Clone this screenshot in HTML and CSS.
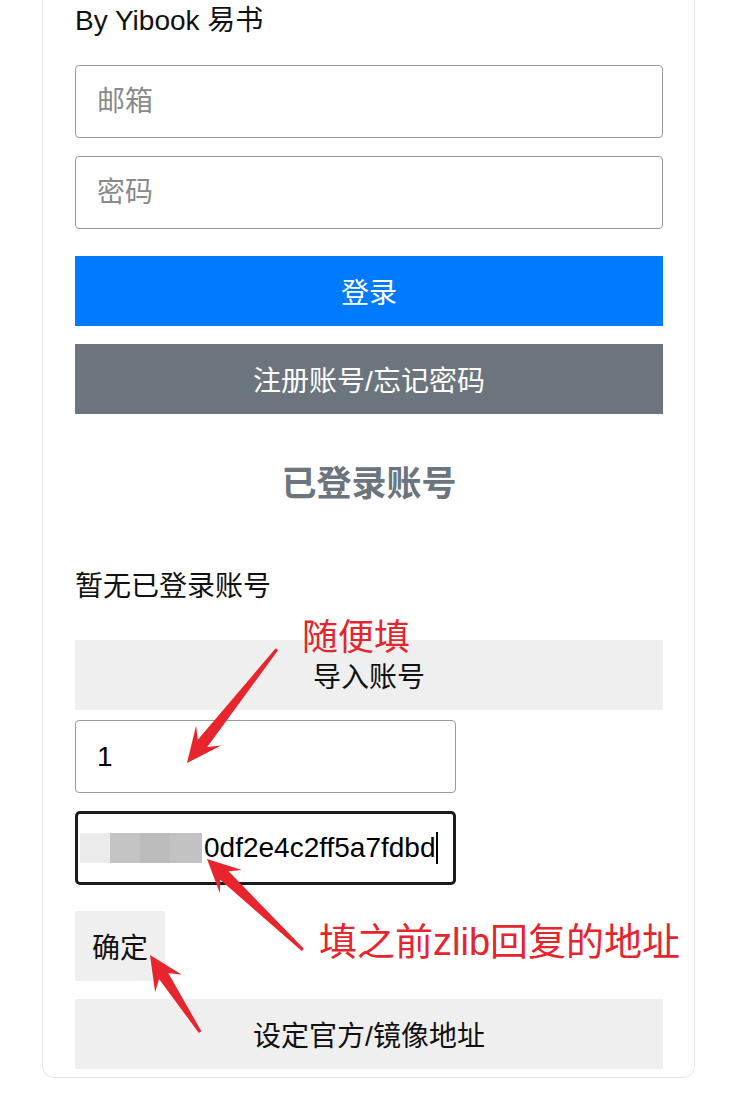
FILE: index.html
```html
<!DOCTYPE html>
<html lang="zh-CN">
<head>
<meta charset="utf-8">
<title>Yibook 易书</title>
<link rel="stylesheet" href="styles.css">
</head>
<body>
<div class="page">
  <div class="card">
    <div class="brand">By Yibook 易书</div>
    <input class="field field-first" type="text" placeholder="邮箱">
    <input class="field" type="password" placeholder="密码">
    <button class="btn btn-primary">登录</button>
    <button class="btn btn-secondary">注册账号/忘记密码</button>
    <h2 class="heading">已登录账号</h2>
    <p class="empty">暂无已登录账号</p>
    <button class="btn btn-light btn-import">导入账号</button>
    <input class="field narrow field-id" type="text" value="1">
    <div class="field narrow focused">
      <span class="blur blur-1"></span><span class="blur blur-2"></span><span class="blur blur-3"></span><span class="blur blur-4"></span><span class="value">0df2e4c2ff5a7fdbd</span><span class="caret"></span>
    </div>
    <button class="btn btn-light btn-confirm">确定</button>
    <button class="btn btn-light">设定官方/镜像地址</button>
  </div>

  <svg class="overlay" width="735" height="1102" viewBox="0 0 735 1102">
    <g class="arrow" transform="translate(187 763) rotate(128.3)">
      <polygon points="-145,-1.5 -25,-6 -35,-16 0,0 -35,16 -25,6 -145,1.5"/>
    </g>
    <g class="arrow" transform="translate(207 859) rotate(-136.5)">
      <polygon points="-132,-1.5 -24,-6 -33,-16 0,0 -33,16 -24,6 -132,1.5"/>
    </g>
    <g class="arrow" transform="translate(150 955) rotate(-123)">
      <polygon points="-92,-1.5 -25,-5.5 -34,-16 0,0 -34,16 -25,5.5 -92,1.5"/>
    </g>
  </svg>
  <div class="note note-1">随便填</div>
  <div class="note note-2">填之前zlib回复的地址</div>
</div>
</body>
</html>
```

FILE: styles.css
```css
html, body {
  margin: 0;
  padding: 0;
  background: #ffffff;
}

body {
  font-family: "Liberation Sans", "Noto Sans CJK SC", sans-serif;
  color: #212529;
}

.page {
  position: relative;
  width: 735px;
  height: 1102px;
  overflow: hidden;
}

.card {
  margin: -20px 0 0 42px;
  width: 653px;
  box-sizing: border-box;
  border: 1px solid #e6e6e6;
  border-radius: 12px;
  padding: 22px 31px 8px 32px;
  display: flex;
  flex-direction: column;
}

.brand {
  font-size: 28px;
  line-height: 36px;
  color: #111111;
}

.field {
  height: 73px;
  box-sizing: border-box;
  margin: 18px 0 0;
  border: 1px solid #9a9a9a;
  border-radius: 4px;
  padding: 0 21px;
  font-family: "Liberation Sans", "Noto Sans CJK SC", sans-serif;
  font-size: 28px;
  color: #000000;
  background: #ffffff;
  outline: none;
}

.field::placeholder {
  color: #8a8a8a;
}

.field-first {
  margin-top: 26px;
}

.btn {
  height: 70px;
  margin: 18px 0 0;
  border: 0;
  border-radius: 0;
  padding: 0;
  font-family: "Liberation Sans", "Noto Sans CJK SC", sans-serif;
  font-size: 28px;
  cursor: pointer;
}

.btn-primary {
  margin-top: 27px;
  background: #007bff;
  color: #ffffff;
}

.btn-secondary {
  background: #6c757d;
  color: #ffffff;
}

.btn-light {
  background: #efefef;
  color: #111111;
}

.heading {
  margin: 50px 0 0;
  font-size: 35px;
  line-height: 40px;
  font-weight: 700;
  color: #6c757d;
  text-align: center;
}

.empty {
  margin: 65px 0 0;
  font-size: 28px;
  line-height: 36px;
  color: #111111;
}

.btn-import {
  margin-top: 35px;
}

.narrow {
  width: 381px;
  align-self: flex-start;
}

.field-id {
  margin-top: 10px;
}

.focused {
  height: 74px;
  border: 3px solid #1b1b1b;
  border-radius: 5px;
  padding: 0 0 0 2px;
  display: flex;
  align-items: center;
}

.blur {
  display: block;
  width: 30px;
  height: 30px;
  flex: none;
}

.blur-1 { background: #ebebeb; }
.blur-2 { background: #c4c4c4; }
.blur-3 { background: #bcbcbc; }
.blur-4 { background: #c2c2c2; width: 32px; }

.value {
  margin-left: 2px;
  font-size: 28px;
  line-height: 34px;
  color: #000000;
}

.caret {
  display: block;
  width: 2px;
  height: 32px;
  margin-left: 1px;
  background: #000000;
}

.btn-confirm {
  margin-top: 26px;
  width: 90px;
  align-self: flex-start;
}

.overlay {
  position: absolute;
  top: 0;
  left: 0;
  pointer-events: none;
}

.arrow polygon {
  fill: #e8252d;
}

.note {
  position: absolute;
  color: #e3262e;
  white-space: nowrap;
  font-family: "Liberation Sans", "Noto Sans CJK SC", sans-serif;
}

.note-1 {
  left: 302px;
  top: 620px;
  font-size: 36px;
  line-height: 36px;
}

.note-2 {
  left: 319px;
  top: 923px;
  font-size: 38px;
  line-height: 38px;
}
```
